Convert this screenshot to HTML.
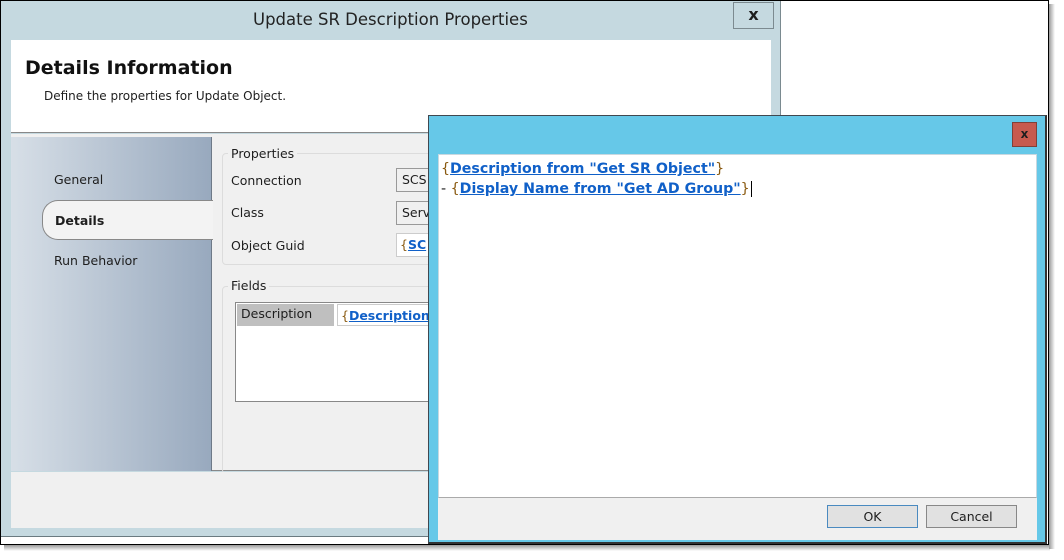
<!DOCTYPE html>
<html><head><style>
*{margin:0;padding:0;box-sizing:border-box}
body{width:1064px;height:560px;background:#fff;position:relative;overflow:hidden;font-family:"DejaVu Sans","Liberation Sans",sans-serif;font-size:12.5px;color:#1e1e1e}
.abs{position:absolute}
a{color:#1060c8;font-weight:bold;text-decoration:underline}
.br{color:#8a5a10}
</style></head><body>
<div class="abs" style="left:4px;top:545px;width:1046px;height:6px;background:linear-gradient(#999,#fff)"></div>
<div class="abs" style="left:1049px;top:4px;width:6px;height:545px;background:linear-gradient(90deg,#999,#fff)"></div>
<div class="abs" style="left:0;top:0;width:1049px;height:545px;border:1px solid #000;background:#fff"></div>
<!-- back dialog -->
<div class="abs" style="left:1px;top:1px;width:780px;height:536px;background:#c5d9e0;border-right:1px solid #7a8a90;border-bottom:1px solid #6a7a80"></div>
<div class="abs" style="left:253px;top:10px;font-size:16.5px;color:#222">Update SR Description Properties</div>
<div class="abs" style="left:733px;top:2px;width:41px;height:27px;border:1px solid #7c8a90;background:#c5d9e0;text-align:center;font-weight:bold;font-size:16px;line-height:24px">x</div>
<div class="abs" style="left:11px;top:40px;width:760px;height:93px;background:#fff;border-bottom:1px solid #888"></div>
<div class="abs" style="left:25px;top:57px;font-size:19px;font-weight:bold;color:#111">Details Information</div>
<div class="abs" style="left:44px;top:89px;font-size:12px">Define the properties for Update Object.</div>
<div class="abs" style="left:11px;top:134px;width:760px;height:337px;background:#f0f0f0;border-bottom:1px solid #888"></div>
<div class="abs" style="left:11px;top:137px;width:201px;height:334px;background:linear-gradient(90deg,#d7dfe7,#98a9be);border-right:1px solid #6e7a88"></div>
<div class="abs" style="left:54px;top:172px">General</div>
<div class="abs" style="left:42px;top:200px;width:171px;height:40px;background:#f3f3f3;border:1px solid #888;border-right:none;border-radius:16px 0 0 16px"></div>
<div class="abs" style="left:55px;top:213px;font-weight:bold">Details</div>
<div class="abs" style="left:54px;top:253px">Run Behavior</div>
<div class="abs" style="left:222px;top:153px;width:220px;height:112px;border:1px solid #dcdcdc;border-radius:4px"></div>
<div class="abs" style="left:228px;top:146px;background:#f0f0f0;padding:0 3px">Properties</div>
<div class="abs" style="left:231px;top:173px">Connection</div>
<div class="abs" style="left:231px;top:205px">Class</div>
<div class="abs" style="left:231px;top:238px">Object Guid</div>
<div class="abs" style="left:396px;top:168px;width:40px;height:24px;border:1px solid #999;background:#f0f0f0;padding:3px 5px">SCS</div>
<div class="abs" style="left:396px;top:201px;width:40px;height:24px;border:1px solid #999;background:#f0f0f0;padding:3px 5px">Serv</div>
<div class="abs" style="left:396px;top:233px;width:40px;height:24px;border:1px solid #ccc;background:#fff;padding:3px 3px"><span class="br">{</span><a>SC</a></div>
<div class="abs" style="left:222px;top:286px;width:220px;height:188px;border:1px solid #dcdcdc;border-radius:4px"></div>
<div class="abs" style="left:228px;top:278px;background:#f0f0f0;padding:0 3px">Fields</div>
<div class="abs" style="left:235px;top:302px;width:200px;height:100px;border:1px solid #888;background:#fff"></div>
<div class="abs" style="left:237px;top:304px;width:97px;height:22px;background:#bfbfbf;padding:2px 4px">Description</div>
<div class="abs" style="left:337px;top:304px;width:100px;height:22px;border:1px solid #ccc;background:#fff;padding:3px 3px;white-space:nowrap;overflow:hidden"><span class="br">{</span><a>Description</a></div>
<div class="abs" style="left:11px;top:472px;width:760px;height:56px;background:#f0f0f0"></div>
<!-- front dialog -->
<div class="abs" style="left:428px;top:115px;width:619px;height:429px;background:#66c8e8;border:1px solid #404850;border-right:2px solid #333;border-bottom:2px solid #333"></div>
<div class="abs" style="left:1012px;top:122px;width:25px;height:25px;background:#c75a4e;border:1px solid #804038;text-align:center;font-weight:bold;font-size:12px;line-height:22px">x</div>
<div class="abs" style="left:438px;top:154px;width:599px;height:344px;background:#fff;border:1px solid #c8d8e0;border-bottom:1px solid #aaa;padding:4px 2px;font-size:14.2px;line-height:20px;white-space:nowrap">
<span class="br">{</span><a>Description from "Get SR Object"</a><span class="br">}</span><br>- <span class="br">{</span><a>Display Name from "Get AD Group"</a><span class="br">}</span><span style="border-left:1px solid #000;margin-left:1px"></span></div>
<div class="abs" style="left:438px;top:498px;width:599px;height:42px;background:#f0f0f0"></div>
<div class="abs" style="left:827px;top:505px;width:91px;height:23px;border:1px solid #4a8ac0;background:#e1e1e1;text-align:center;line-height:21px">OK</div>
<div class="abs" style="left:926px;top:505px;width:91px;height:23px;border:1px solid #888;background:#e1e1e1;text-align:center;line-height:21px">Cancel</div>
</body></html>
